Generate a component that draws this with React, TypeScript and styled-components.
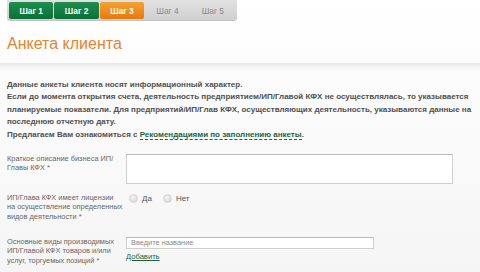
import React from "react";
import styled, { createGlobalStyle } from "styled-components";

const Global = createGlobalStyle`
  html, body { margin: 0; padding: 0; }
  body {
    width: 480px; height: 272px; overflow: hidden;
    font-family: "Liberation Sans", Arial, sans-serif;
    background: linear-gradient(180deg, #ffffff 0%, #fbfbfb 40%, #f5f5f5 100%);
  }
`;

const Page = styled.div`
  padding: 0 7px;
  display: flex;
  flex-direction: column;
`;

const Steps = styled.div`
  display: flex;
  gap: 1px;
  width: 226px;
  height: 17px;
  padding: 2px;
  background: linear-gradient(180deg, #e2e2e2, #cfcfcf);
  border-radius: 0 0 4px 4px;
  box-shadow: inset 0 -1px 0 #c4c4c4;
`;

const Step = styled.div<{ $state: "done" | "active" | "todo" }>`
  flex: 1;
  display: flex;
  align-items: center;
  justify-content: center;
  font-size: 8.4px;
  border-radius: 2px;
  color: ${(p) => (p.$state === "todo" ? "#8a8a8a" : "#ffffff")};
  font-weight: ${(p) => (p.$state === "todo" ? "normal" : "bold")};
  background: ${(p) =>
    p.$state === "done"
      ? "linear-gradient(180deg, #1e8f4e 0%, #0b7036 100%)"
      : p.$state === "active"
      ? "linear-gradient(180deg, #f6a22e 0%, #e67810 100%)"
      : "transparent"};
`;

const Title = styled.h1`
  margin: 13px 0 0;
  font-size: 16px;
  line-height: 20px;
  font-weight: normal;
  color: #e2852f;
`;

const Divider = styled.div`
  margin: 9px -7px 0;
  height: 10px;
  background: linear-gradient(180deg, #e6e6e6 0%, rgba(240, 240, 240, 0.4) 50%, rgba(255, 255, 255, 0) 100%);
`;

const Intro = styled.div`
  margin-top: 6px;
  font-size: 8px;
  line-height: 12.4px;
  font-weight: bold;
  color: #505050;
`;

const IntroLine = styled.div``;

const Link = styled.a`
  color: #17663a;
  text-decoration: none;
  border-bottom: 1px dashed #17663a;
`;

const Form = styled.div`
  margin-top: 13px;
  display: flex;
  flex-direction: column;
`;

const Row = styled.div<{ $mt: number }>`
  display: grid;
  grid-template-columns: 119px 1fr;
  align-items: start;
  margin-top: ${(p) => p.$mt}px;
`;

const Label = styled.div`
  font-size: 7.4px;
  line-height: 9.3px;
  color: #666;
`;

const Field = styled.div`
  display: flex;
  flex-direction: column;
  align-items: flex-start;
`;

const TextArea = styled.div`
  width: 325px;
  height: 28px;
  background: #fff;
  border: 1px solid #cfcfcf;
  border-top-color: #b9b9b9;
`;

const Radios = styled.div`
  display: flex;
  align-items: center;
  height: 10px;
  padding-left: 3px;
`;

const RadioItem = styled.label`
  display: flex;
  align-items: center;
  margin-right: 11px;
  font-size: 8px;
  color: #555;
`;

const Circle = styled.span`
  width: 7px;
  height: 7px;
  border-radius: 50%;
  margin-right: 4px;
  background: radial-gradient(circle at 40% 35%, #f4f4f4, #cfcfcf);
  border: 1px solid #d6d6d6;
`;

const Input = styled.div`
  width: 242px;
  height: 10px;
  padding-left: 4px;
  background: #fff;
  border: 1px solid #cfcfcf;
  border-top-color: #b9b9b9;
  font-size: 7.4px;
  line-height: 10px;
  color: #8a8a8a;
`;

const AddLink = styled.a`
  margin-top: 3px;
  font-size: 7.6px;
  color: #17663a;
  text-decoration: underline;
`;

export default function App() {
  return (
    <>
      <Global />
      <Page>
        <Steps>
          <Step $state="done">Шаг 1</Step>
          <Step $state="done">Шаг 2</Step>
          <Step $state="active">Шаг 3</Step>
          <Step $state="todo">Шаг 4</Step>
          <Step $state="todo">Шаг 5</Step>
        </Steps>
        <Title>Анкета клиента</Title>
        <Divider />
        <Intro>
          <IntroLine>Данные анкеты клиента носят информационный характер.</IntroLine>
          <IntroLine>
            Если до момента открытия счета, деятельность предприятием/ИП/Главой КФХ не осуществлялась, то указывается
            планируемые показатели. Для предприятий/ИП/Глав КФХ, осуществляющих деятельность, указываются данные на
            последнюю отчетную дату.
          </IntroLine>
          <IntroLine>
            Предлагаем Вам ознакомиться с <Link>Рекомендациями по заполнению анкеты</Link>.
          </IntroLine>
        </Intro>
        <Form>
          <Row $mt={0}>
            <Label>
              Краткое описание бизнеса ИП/
              <br />
              Главы КФХ *
            </Label>
            <Field>
              <TextArea />
            </Field>
          </Row>
          <Row $mt={9}>
            <Label>
              ИП/Глава КФХ имеет лицензии
              <br />
              на осуществление определенных
              <br />
              видов деятельности *
            </Label>
            <Radios>
              <RadioItem>
                <Circle />
                Да
              </RadioItem>
              <RadioItem>
                <Circle />
                Нет
              </RadioItem>
            </Radios>
          </Row>
          <Row $mt={16}>
            <Label>
              Основные виды производимых
              <br />
              ИП/Главой КФХ товаров и/или
              <br />
              услуг, торгуемых позиций *
            </Label>
            <Field>
              <Input>Введите название</Input>
              <AddLink>Добавить</AddLink>
            </Field>
          </Row>
        </Form>
      </Page>
    </>
  );
}
